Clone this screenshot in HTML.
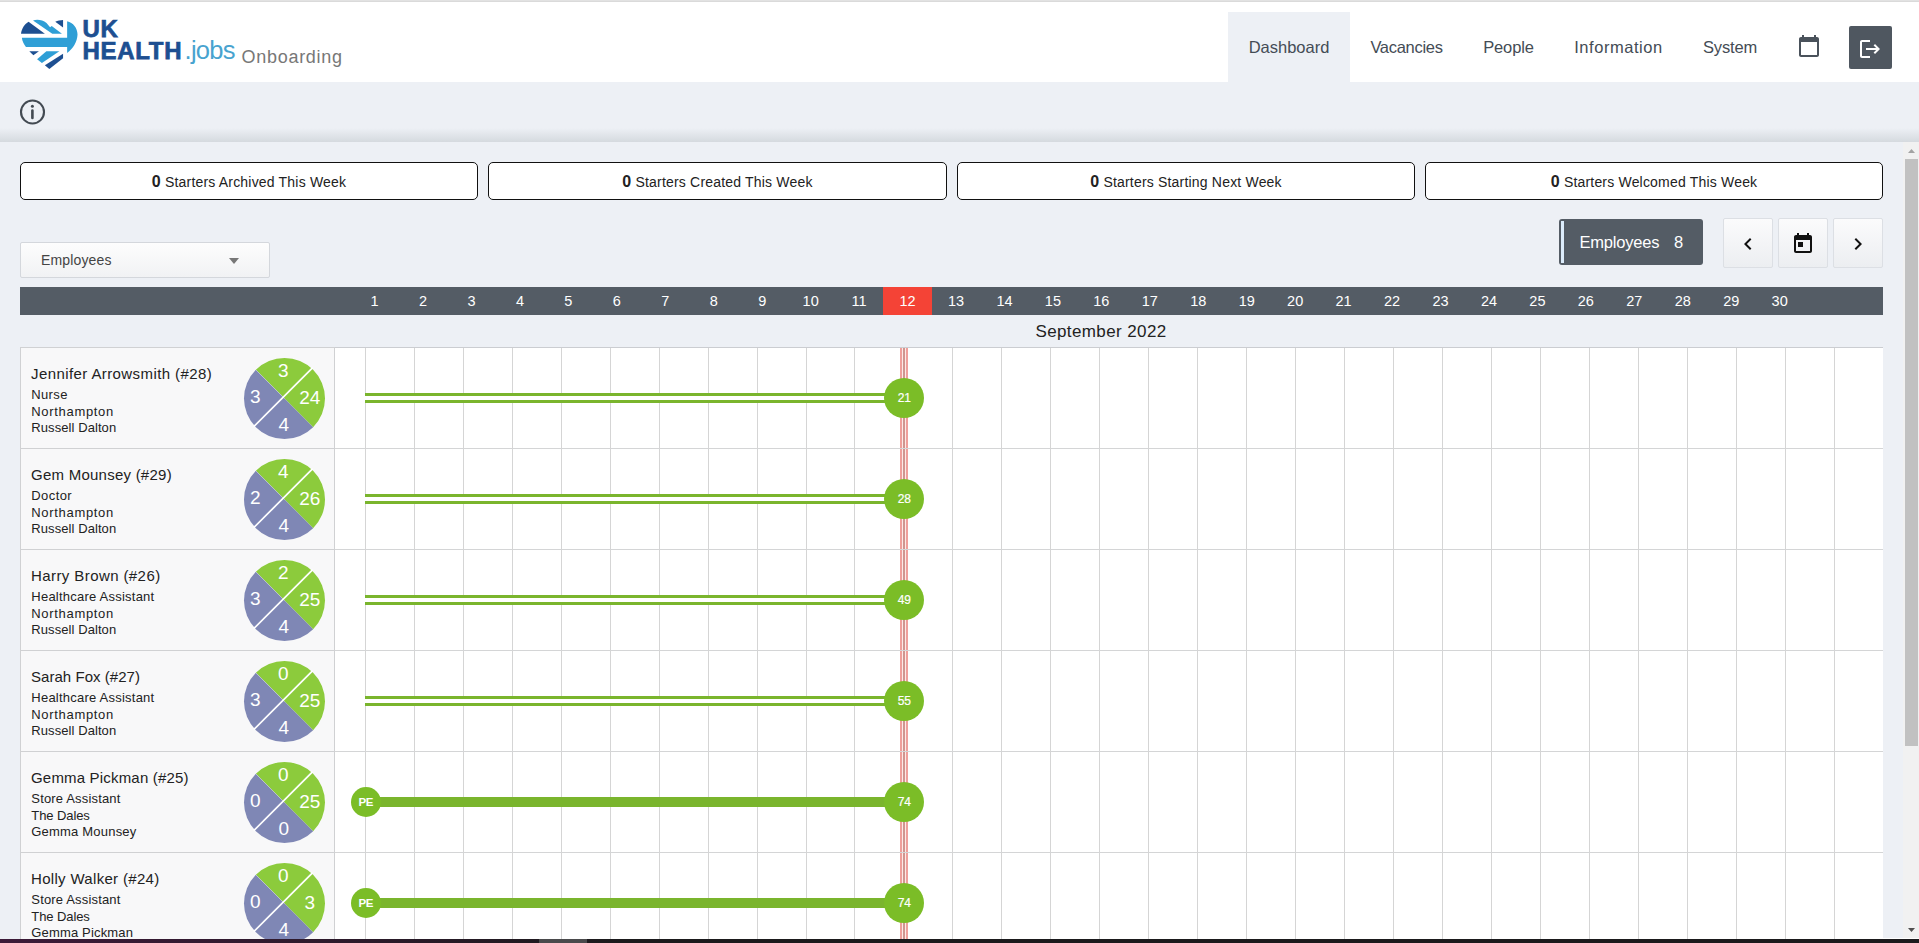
<!DOCTYPE html>
<html lang="en"><head><meta charset="utf-8"><title>UK Health Jobs Onboarding - Dashboard</title>
<style>
*{box-sizing:border-box}
html,body{margin:0;padding:0}
body{width:1919px;height:943px;overflow:hidden;position:relative;background:#edf0f5;font-family:"Liberation Sans",sans-serif;color:#212121}
.abs{position:absolute}
.topline{position:absolute;left:0;top:0;width:1919px;height:2px;background:linear-gradient(#e6e6e6,#d6d6d6)}
.hdr{position:absolute;left:0;top:2px;width:1919px;height:80px;background:#fff}
.logo{position:absolute;left:0;top:0}
.nav{position:absolute;top:12px;height:70px;font-size:16.5px;line-height:71px;color:#444c55;text-align:center;white-space:nowrap}
.nav.act{background:#edf0f5}
.logout{position:absolute;left:1849px;top:26px;width:43px;height:43px;background:#4f5760;border-radius:2px}
.shadow{position:absolute;left:0;top:128px;width:1919px;height:14px;background:linear-gradient(rgba(0,0,0,0),rgba(45,62,66,.125))}
.stat{position:absolute;top:162px;height:38px;width:458px;border:1px solid #111;border-radius:5px;background:#fff;text-align:center;line-height:37px;font-size:14px;color:#222;white-space:nowrap;letter-spacing:.19px}
.stat b{font-size:16px;font-weight:bold;color:#222}
.dd{position:absolute;left:20px;top:242px;width:250px;height:36px;border:1px solid #d4d7dc;border-radius:2px;background:linear-gradient(#fdfdfd,#f1f2f4);font-size:14px;line-height:35px;padding-left:20px;color:#444;letter-spacing:.15px}
.dd i{position:absolute;left:207.7px;top:14.5px;border:5.3px solid transparent;border-top:6px solid #777;border-bottom:0}
.badge{position:absolute;left:1559px;top:219px;width:144px;height:46px;background:#545c65;border-radius:3px;color:#fff;font-size:16.5px;line-height:46px;white-space:nowrap}
.badge u{position:absolute;left:2px;top:2px;width:3px;height:42px;background:#dcecfb}
.badge span{position:absolute;top:0}
.be{left:20.5px;letter-spacing:-0.2px}
.b8{left:115px}
.lg1,.lg2,.lg3,.lg4{position:absolute;white-space:nowrap}
.lg1{left:82.5px;top:15.2px;font-size:24px;line-height:28px;font-weight:bold;color:#1d4f91;letter-spacing:.7px;-webkit-text-stroke:.75px #1d4f91}
.lg2{left:82.5px;top:37.3px;font-size:24px;line-height:28px;font-weight:bold;color:#1d4f91;letter-spacing:.7px;-webkit-text-stroke:.75px #1d4f91}
.lg3{left:184.5px;top:36.2px;font-size:25.5px;line-height:28px;color:#48a3cf;letter-spacing:-.7px}
.lg4{left:241.4px;top:46px;font-size:18px;line-height:22px;color:#777;letter-spacing:.74px}
.btn{position:absolute;top:218px;width:50px;height:50px;border:1px solid #dcdfe4;border-radius:2px;background:linear-gradient(#fbfbfc,#eceef1)}
.days{position:absolute;left:20px;top:287px;width:1863px;height:28px;background:#545c65;color:#fff;font-size:14.5px;line-height:28px}
.day{position:absolute;top:0;height:28px;text-align:center}
.day.today{background:#f44336}
.month{position:absolute;left:901px;top:321px;width:400px;text-align:center;font-size:17px;line-height:22px;color:#222;letter-spacing:.39px}
.grid{position:absolute;left:20px;top:347px;width:1863px;height:592px;overflow:hidden}
.gridbg{position:absolute;left:0;top:0;width:1863px;height:592px;background:#fff;border-top:1px solid #cbcdd1}
.vl{position:absolute;top:1px;width:1px;height:600px;background:#d5d5d5}
.todayline{position:absolute;left:880px;top:1px;width:8px;height:600px;background:#fdeae7}
.todayline b{position:absolute;top:0;width:2px;height:600px;background:#ef9f9b;left:0}
.todayline b.m{left:3px;background:#cf9690}
.todayline b:last-child{left:6px}
.row{position:absolute;left:0;width:1863px;height:101px}
.info{position:absolute;left:0;top:0;width:315px;height:102px;background:#f8f8f9;border:1px solid #d0d1d3;padding:15px 0 0 10.3px}
.nm{font-size:15px;line-height:21px;white-space:nowrap;color:#222;margin-left:-.3px}
.sm{font-size:13px;line-height:16.5px;white-space:nowrap;color:#222;position:relative;top:2.6px}
.row::after{content:"";position:absolute;left:315px;top:101px;width:1548px;height:1px;background:#d4d5d6}
.pie{position:absolute;left:223px;top:10px;width:83px;height:83px;color:#fff;font-size:19px}
.pie svg{position:absolute;left:0;top:0}
.pie span{position:absolute;width:40px;text-align:center;line-height:22px;height:22px}
.pt{left:20.3px;top:3.2px}
.pr{left:46.8px;top:30.3px}
.pb{left:20.8px;top:56.8px}
.pl{left:-7.8px;top:28.7px}
.bar{position:absolute;left:345px;width:540px;top:46px;height:10px}
.bar.dbl{border-top:3px solid #7ab52d;border-bottom:3px solid #7ab52d;background:#fff}
.bar.solid{background:#7ab52d}
.dot{position:absolute;border-radius:50%;background:#7bbd27;color:#fff;text-align:center;font-size:12px}
.dot.sc{left:864px;top:31px;width:40px;height:40px;line-height:40px;text-indent:.7px;-webkit-text-stroke:.2px #fff}
.dot.pe{left:330.5px;top:36px;width:30px;height:30px;line-height:30px;font-weight:bold;font-size:11.5px;letter-spacing:-.5px;text-indent:.5px}
.sbtrack{position:absolute;left:1903px;top:142px;width:16px;height:797px;background:#f1f1f1}
.sbthumb{position:absolute;left:1905px;top:159px;width:13px;height:587px;background:#c1c1c1}
.botbar{position:absolute;left:0;top:939px;width:1919px;height:4px;background:linear-gradient(90deg,#3c1a38 0,#2c1a2b 350px,#1b1a1c 620px)}
.botline{position:absolute;left:1883px;top:938px;width:36px;height:1px;background:#fff}

.sm+.sm{top:3.1px}
.sm+.sm+.sm{top:2.7px}

</style></head>
<body>
<div class="topline"></div>
<div class="hdr"></div>
<svg class="logo" width="360" height="84" viewBox="0 0 360 84">
<g transform="translate(10,10) scale(0.07421)">
<path d="M148 320C155 250 200 190 250 160L470 320Z" fill="#1d4f91"/>
<path d="M310 140C360 122 440 128 492 176L540 232L562 215L700 320L570 320Z" fill="#2f9fd6"/>
<path d="M610 160C640 145 680 137 715 135L715 235Z" fill="#1d4f91"/>
<path d="M160 375L770 375L770 150C850 170 910 240 910 330C905 430 850 520 770 580L770 500L215 500C185 460 165 420 160 375Z" fill="#2f9fd6"/>
<path d="M260 555L390 555L315 610Z" fill="#1d4f91"/>
<path d="M490 555L665 555L430 715L365 665Z" fill="#2f9fd6"/>
<path d="M715 590L715 650L530 795L470 745Z" fill="#1d4f91"/>
</g>
</svg>
<div class="lg1">UK</div>
<div class="lg2">HEALTH</div>
<div class="lg3">.jobs</div>
<div class="lg4">Onboarding</div>
<div class="nav act" style="left:1228px;width:122px">Dashboard</div>
<div class="nav" style="left:1350px;width:113px;letter-spacing:-.3px">Vacancies</div>
<div class="nav" style="left:1463px;width:91px;letter-spacing:-.13px">People</div>
<div class="nav" style="left:1554px;width:129px;letter-spacing:.54px">Information</div>
<div class="nav" style="left:1683px;width:94px;letter-spacing:-.16px">System</div>
<svg class="abs" style="left:1797px;top:34px" width="24" height="24" viewBox="0 0 24 24"><path fill="#4a525b" d="M20 3h-1V1h-2v2H7V1H5v2H4c-1.1 0-2 .9-2 2v16c0 1.1.9 2 2 2h16c1.1 0 2-.9 2-2V5c0-1.1-.9-2-2-2zm0 18H4V8h16v13z"/></svg>
<div class="logout"><svg class="abs" style="left:9px;top:11px" width="24" height="24" viewBox="0 0 24 24"><path fill="#fff" d="M17 7l-1.41 1.41L18.17 11H8v2h10.17l-2.58 2.58L17 17l5-5zM4 5h8V3H4c-1.1 0-2 .9-2 2v14c0 1.1.9 2 2 2h8v-2H4V5z"/></svg></div>
<svg class="abs" style="left:18px;top:98px" width="28" height="28" viewBox="0 0 28 28"><circle cx="14.5" cy="14" r="11.5" fill="none" stroke="#434a52" stroke-width="2.1"/><circle cx="14.4" cy="8.2" r="1.5" fill="#434a52"/><path d="M14.4 12.6V20" stroke="#434a52" stroke-width="2.6" stroke-linecap="round"/></svg>
<div class="shadow"></div>
<div class="stat" style="left:20px"><b>0</b> Starters Archived This Week</div>
<div class="stat" style="left:488px;width:459px"><b>0</b> Starters Created This Week</div>
<div class="stat" style="left:957px"><b>0</b> Starters Starting Next Week</div>
<div class="stat" style="left:1425px"><b>0</b> Starters Welcomed This Week</div>
<div class="dd">Employees<i></i></div>
<div class="badge"><u></u><span class="be">Employees</span><span class="b8">8</span></div>
<div class="btn" style="left:1723px"><svg class="abs" style="left:12px;top:13px" width="24" height="24" viewBox="0 0 24 24"><path fill="#111" d="M15.41 7.41L14 6l-6 6 6 6 1.41-1.41L10.83 12z"/></svg></div>
<div class="btn" style="left:1778px"><svg class="abs" style="left:12px;top:13px" width="24" height="24" viewBox="0 0 24 24"><path fill="#111" d="M19 3h-1V1h-2v2H8V1H6v2H5c-1.11 0-1.99.9-1.99 2L3 19c0 1.1.89 2 2 2h14c1.1 0 2-.9 2-2V5c0-1.1-.9-2-2-2zm0 16H5V8h14v11zM7 10h5v5H7z"/></svg></div>
<div class="btn" style="left:1833px"><svg class="abs" style="left:12px;top:13px" width="24" height="24" viewBox="0 0 24 24"><path fill="#111" d="M10 6L8.59 7.41 13.17 12l-4.58 4.59L10 18l6-6z"/></svg></div>
<div class="days"><div class="day" style="left:330.40px;width:48.45px">1</div><div class="day" style="left:378.85px;width:48.45px">2</div><div class="day" style="left:427.30px;width:48.45px">3</div><div class="day" style="left:475.75px;width:48.45px">4</div><div class="day" style="left:524.20px;width:48.45px">5</div><div class="day" style="left:572.65px;width:48.45px">6</div><div class="day" style="left:621.10px;width:48.45px">7</div><div class="day" style="left:669.55px;width:48.45px">8</div><div class="day" style="left:718.00px;width:48.45px">9</div><div class="day" style="left:766.45px;width:48.45px">10</div><div class="day" style="left:814.90px;width:48.45px">11</div><div class="day today" style="left:863px;width:49px">12</div><div class="day" style="left:911.80px;width:48.45px">13</div><div class="day" style="left:960.25px;width:48.45px">14</div><div class="day" style="left:1008.70px;width:48.45px">15</div><div class="day" style="left:1057.15px;width:48.45px">16</div><div class="day" style="left:1105.60px;width:48.45px">17</div><div class="day" style="left:1154.05px;width:48.45px">18</div><div class="day" style="left:1202.50px;width:48.45px">19</div><div class="day" style="left:1250.95px;width:48.45px">20</div><div class="day" style="left:1299.40px;width:48.45px">21</div><div class="day" style="left:1347.85px;width:48.45px">22</div><div class="day" style="left:1396.30px;width:48.45px">23</div><div class="day" style="left:1444.75px;width:48.45px">24</div><div class="day" style="left:1493.20px;width:48.45px">25</div><div class="day" style="left:1541.65px;width:48.45px">26</div><div class="day" style="left:1590.10px;width:48.45px">27</div><div class="day" style="left:1638.55px;width:48.45px">28</div><div class="day" style="left:1687.00px;width:48.45px">29</div><div class="day" style="left:1735.45px;width:48.45px">30</div></div>
<div class="month">September 2022</div>
<div class="grid">
<div class="gridbg"></div>
<i class="vl" style="left:345px"></i><i class="vl" style="left:394px"></i><i class="vl" style="left:443px"></i><i class="vl" style="left:492px"></i><i class="vl" style="left:541px"></i><i class="vl" style="left:590px"></i><i class="vl" style="left:639px"></i><i class="vl" style="left:688px"></i><i class="vl" style="left:737px"></i><i class="vl" style="left:786px"></i><i class="vl" style="left:834px"></i><i class="vl" style="left:932px"></i><i class="vl" style="left:981px"></i><i class="vl" style="left:1030px"></i><i class="vl" style="left:1079px"></i><i class="vl" style="left:1128px"></i><i class="vl" style="left:1177px"></i><i class="vl" style="left:1226px"></i><i class="vl" style="left:1275px"></i><i class="vl" style="left:1324px"></i><i class="vl" style="left:1373px"></i><i class="vl" style="left:1422px"></i><i class="vl" style="left:1471px"></i><i class="vl" style="left:1520px"></i><i class="vl" style="left:1569px"></i><i class="vl" style="left:1618px"></i><i class="vl" style="left:1667px"></i><i class="vl" style="left:1716px"></i><i class="vl" style="left:1765px"></i><i class="vl" style="left:1814px"></i>
<div class="todayline"><b></b><b class="m"></b><b></b></div>
<div class="row" style="top:0px"><div class="info"><div class="nm" style="letter-spacing:0.408px">Jennifer Arrowsmith (#28)</div><div class="sm" style="letter-spacing:0.35px">Nurse</div><div class="sm" style="letter-spacing:0.68px">Northampton</div><div class="sm" style="letter-spacing:0.08px">Russell Dalton</div></div><div class="pie"><svg width="83" height="83" viewBox="-41.5 -41.5 83 83"><path d="M-28.64 -28.64A40.5 40.5 0 0 1 28.64 28.64Z" fill="#8ccb3c"/><path d="M28.64 28.64A40.5 40.5 0 0 1 -28.64 -28.64Z" fill="#7f87b5"/><path d="M28.2 -30.8L-30.8 28.2" stroke="#fff" stroke-width="1.7"/><path d="M-29.5 -29.5L0 0" stroke="#fff" stroke-width="0.5" stroke-opacity="0.5"/></svg><span class="pt">3</span><span class="pr">24</span><span class="pb">4</span><span class="pl">3</span></div><div class="bar dbl"></div><div class="dot sc">21</div></div>
<div class="row" style="top:101px"><div class="info"><div class="nm" style="letter-spacing:0.244px">Gem Mounsey (#29)</div><div class="sm" style="letter-spacing:0.42px">Doctor</div><div class="sm" style="letter-spacing:0.68px">Northampton</div><div class="sm" style="letter-spacing:0.08px">Russell Dalton</div></div><div class="pie"><svg width="83" height="83" viewBox="-41.5 -41.5 83 83"><path d="M-28.64 -28.64A40.5 40.5 0 0 1 28.64 28.64Z" fill="#8ccb3c"/><path d="M28.64 28.64A40.5 40.5 0 0 1 -28.64 -28.64Z" fill="#7f87b5"/><path d="M28.2 -30.8L-30.8 28.2" stroke="#fff" stroke-width="1.7"/><path d="M-29.5 -29.5L0 0" stroke="#fff" stroke-width="0.5" stroke-opacity="0.5"/></svg><span class="pt">4</span><span class="pr">26</span><span class="pb">4</span><span class="pl">2</span></div><div class="bar dbl"></div><div class="dot sc">28</div></div>
<div class="row" style="top:202px"><div class="info"><div class="nm" style="letter-spacing:0.412px">Harry Brown (#26)</div><div class="sm" style="letter-spacing:0.23px">Healthcare Assistant</div><div class="sm" style="letter-spacing:0.68px">Northampton</div><div class="sm" style="letter-spacing:0.08px">Russell Dalton</div></div><div class="pie"><svg width="83" height="83" viewBox="-41.5 -41.5 83 83"><path d="M-28.64 -28.64A40.5 40.5 0 0 1 28.64 28.64Z" fill="#8ccb3c"/><path d="M28.64 28.64A40.5 40.5 0 0 1 -28.64 -28.64Z" fill="#7f87b5"/><path d="M28.2 -30.8L-30.8 28.2" stroke="#fff" stroke-width="1.7"/><path d="M-29.5 -29.5L0 0" stroke="#fff" stroke-width="0.5" stroke-opacity="0.5"/></svg><span class="pt">2</span><span class="pr">25</span><span class="pb">4</span><span class="pl">3</span></div><div class="bar dbl"></div><div class="dot sc">49</div></div>
<div class="row" style="top:303px"><div class="info"><div class="nm" style="letter-spacing:0.043px">Sarah Fox (#27)</div><div class="sm" style="letter-spacing:0.23px">Healthcare Assistant</div><div class="sm" style="letter-spacing:0.68px">Northampton</div><div class="sm" style="letter-spacing:0.08px">Russell Dalton</div></div><div class="pie"><svg width="83" height="83" viewBox="-41.5 -41.5 83 83"><path d="M-28.64 -28.64A40.5 40.5 0 0 1 28.64 28.64Z" fill="#8ccb3c"/><path d="M28.64 28.64A40.5 40.5 0 0 1 -28.64 -28.64Z" fill="#7f87b5"/><path d="M28.2 -30.8L-30.8 28.2" stroke="#fff" stroke-width="1.7"/><path d="M-29.5 -29.5L0 0" stroke="#fff" stroke-width="0.5" stroke-opacity="0.5"/></svg><span class="pt">0</span><span class="pr">25</span><span class="pb">4</span><span class="pl">3</span></div><div class="bar dbl"></div><div class="dot sc">55</div></div>
<div class="row" style="top:404px"><div class="info"><div class="nm" style="letter-spacing:0.183px">Gemma Pickman (#25)</div><div class="sm" style="letter-spacing:0.17px">Store Assistant</div><div class="sm" style="letter-spacing:-0.088px">The Dales</div><div class="sm" style="letter-spacing:0.2px">Gemma Mounsey</div></div><div class="pie"><svg width="83" height="83" viewBox="-41.5 -41.5 83 83"><path d="M-28.64 -28.64A40.5 40.5 0 0 1 28.64 28.64Z" fill="#8ccb3c"/><path d="M28.64 28.64A40.5 40.5 0 0 1 -28.64 -28.64Z" fill="#7f87b5"/><path d="M28.2 -30.8L-30.8 28.2" stroke="#fff" stroke-width="1.7"/><path d="M-29.5 -29.5L0 0" stroke="#fff" stroke-width="0.5" stroke-opacity="0.5"/></svg><span class="pt">0</span><span class="pr">25</span><span class="pb">0</span><span class="pl">0</span></div><div class="bar solid"></div><div class="dot pe">PE</div><div class="dot sc">74</div></div>
<div class="row" style="top:505px"><div class="info"><div class="nm" style="letter-spacing:0.318px">Holly Walker (#24)</div><div class="sm" style="letter-spacing:0.17px">Store Assistant</div><div class="sm" style="letter-spacing:-0.088px">The Dales</div><div class="sm" style="letter-spacing:0.16px">Gemma Pickman</div></div><div class="pie"><svg width="83" height="83" viewBox="-41.5 -41.5 83 83"><path d="M-28.64 -28.64A40.5 40.5 0 0 1 28.64 28.64Z" fill="#8ccb3c"/><path d="M28.64 28.64A40.5 40.5 0 0 1 -28.64 -28.64Z" fill="#7f87b5"/><path d="M28.2 -30.8L-30.8 28.2" stroke="#fff" stroke-width="1.7"/><path d="M-29.5 -29.5L0 0" stroke="#fff" stroke-width="0.5" stroke-opacity="0.5"/></svg><span class="pt">0</span><span class="pr">3</span><span class="pb">4</span><span class="pl">0</span></div><div class="bar solid"></div><div class="dot pe">PE</div><div class="dot sc">74</div></div>
</div>
<div class="sbtrack"></div>
<div class="sbthumb"></div>
<svg class="abs" style="left:1903px;top:142px" width="16" height="17" viewBox="0 0 16 17"><path d="M5 11L8.5 7L12 11Z" fill="#a3a3a3"/></svg>
<svg class="abs" style="left:1903px;top:921px" width="16" height="17" viewBox="0 0 16 17"><path d="M5 7L8.5 11L12 7Z" fill="#505050"/></svg>
<div class="botline"></div>
<div class="botbar"><div style="position:absolute;left:539px;top:0;width:48px;height:4px;background:#4a4a4c"></div></div>
</body></html>
